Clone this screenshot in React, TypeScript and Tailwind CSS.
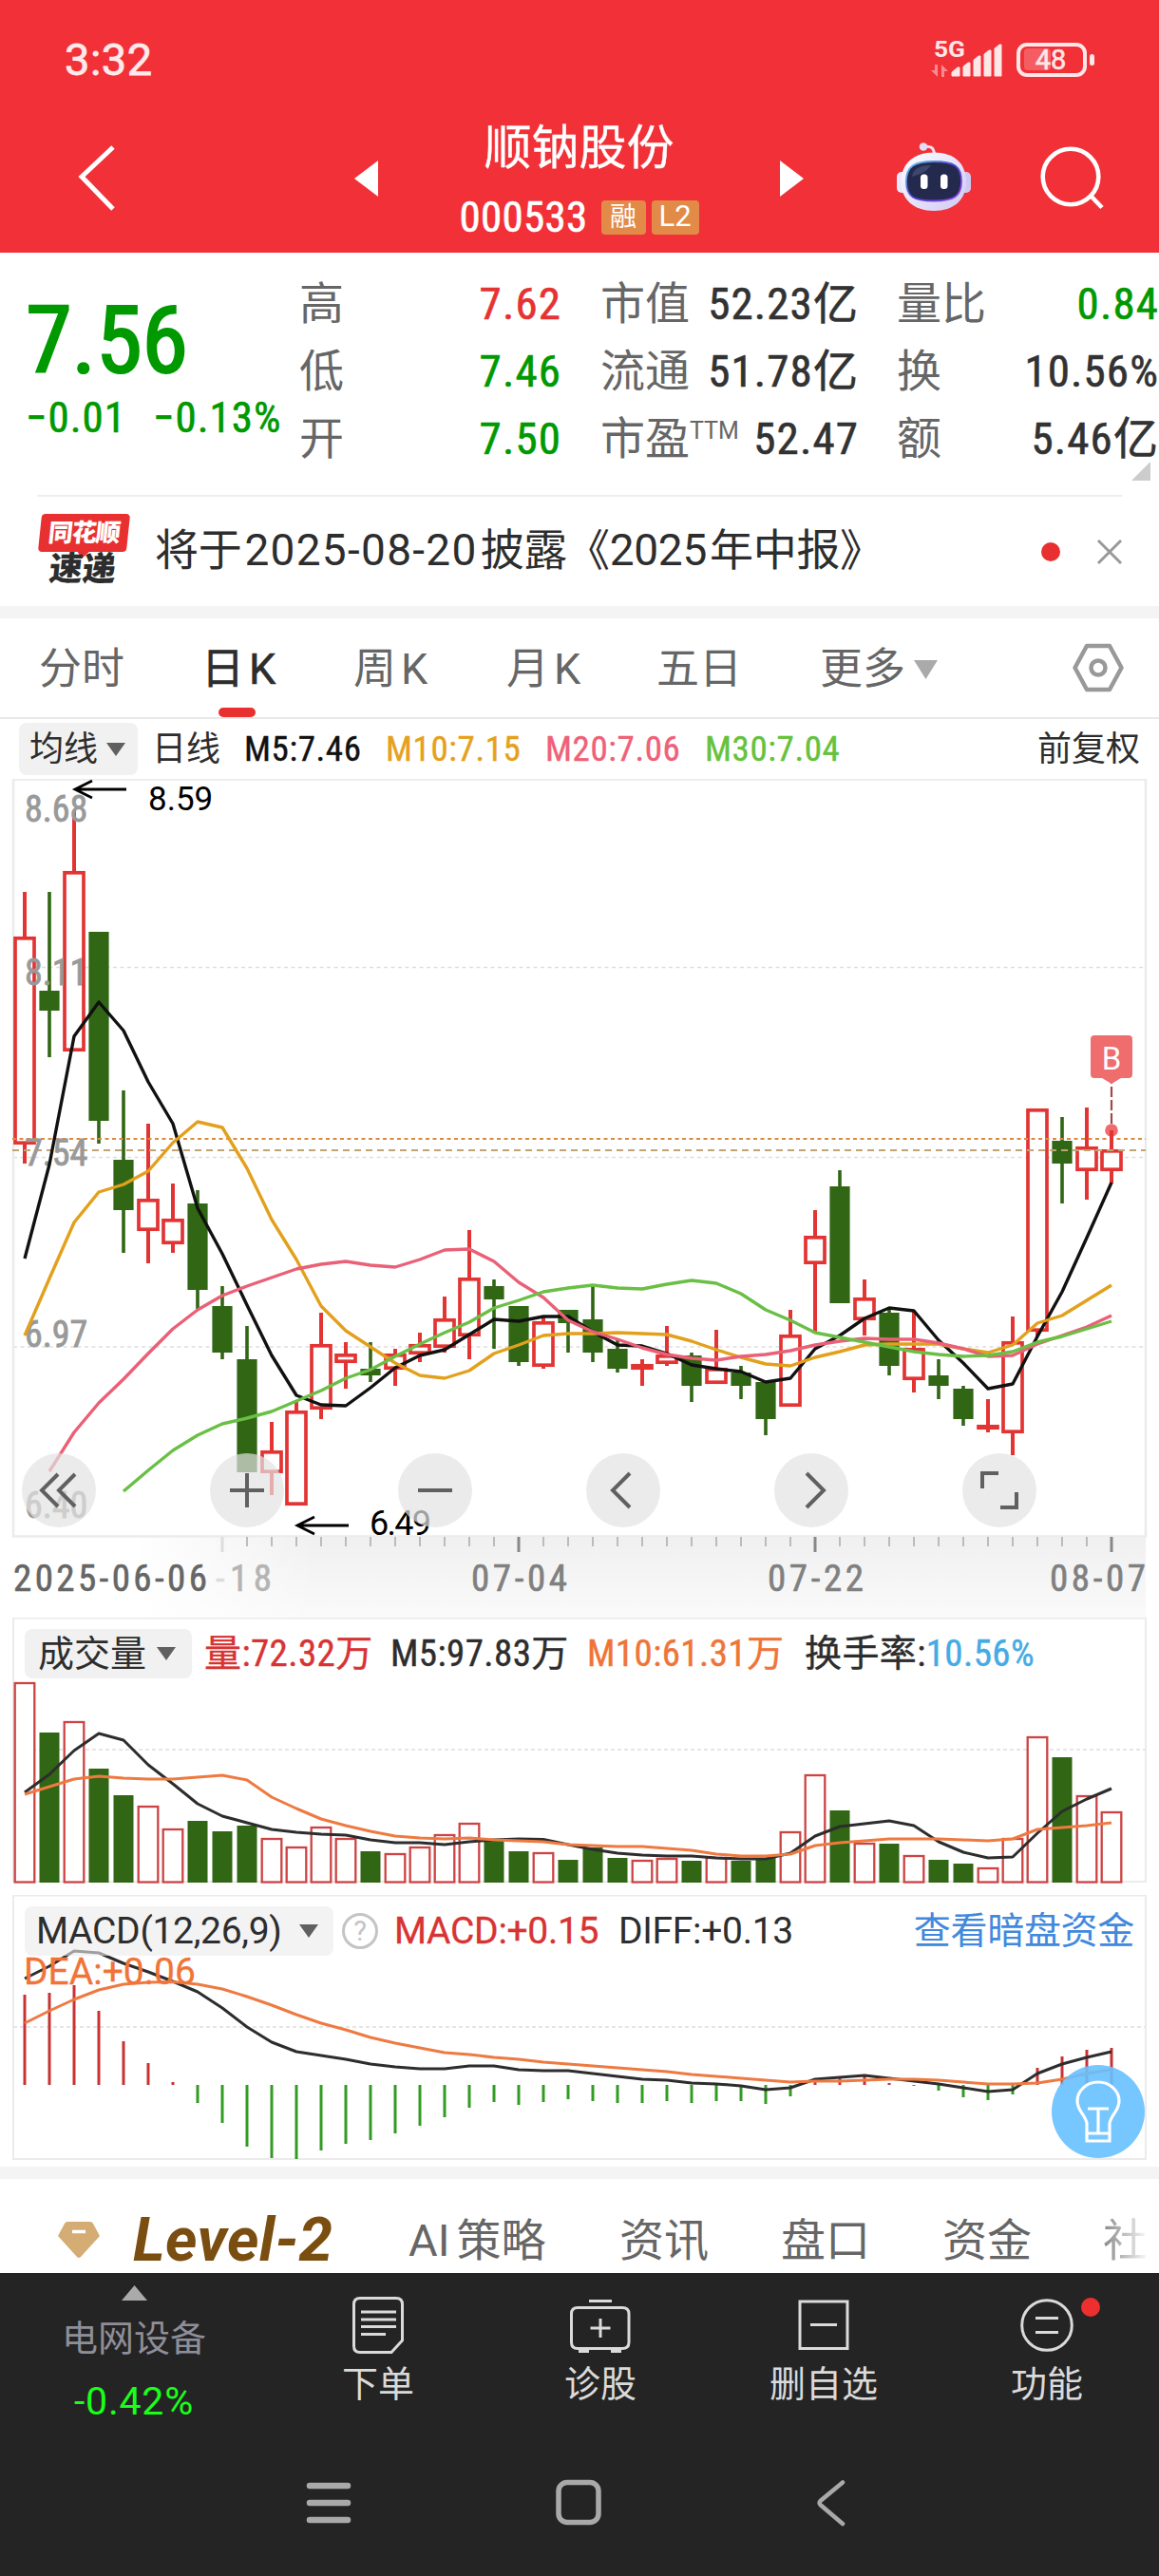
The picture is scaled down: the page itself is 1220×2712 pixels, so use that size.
import { ReactNode } from 'react';

// x of candle i; every series below uses the same 26px step
const cx = (i: number) => 26 + i * 26;

// [high, bodyTop, bodyBottom, low, rising]
const CANDLES: [number, number, number, number, 0 | 1][] = [
  [939, 986, 1205, 1225, 1], [939, 1043, 1064, 1113, 0], [853, 917, 1107, 1107, 1], [981, 981, 1180, 1204, 0],
  [1148, 1221, 1274, 1319, 0], [1183, 1262, 1296, 1330, 1], [1246, 1283, 1310, 1319, 1], [1253, 1267, 1358, 1378, 0],
  [1354, 1375, 1424, 1431, 0], [1396, 1431, 1550, 1550, 0], [1497, 1527, 1551, 1574, 1], [1476, 1485, 1585, 1585, 1],
  [1382, 1415, 1484, 1494, 1], [1413, 1425, 1435, 1462, 1], [1413, 1441, 1448, 1455, 0], [1420, 1425, 1442, 1459, 1],
  [1403, 1415, 1426, 1434, 1], [1365, 1388, 1419, 1424, 1], [1295, 1345, 1407, 1431, 1], [1347, 1354, 1368, 1420, 0],
  [1375, 1375, 1434, 1438, 0], [1387, 1391, 1439, 1441, 1], [1379, 1379, 1393, 1424, 0], [1353, 1389, 1424, 1434, 0],
  [1411, 1420, 1441, 1445, 0], [1431, 1436, 1442, 1459, 1], [1396, 1426, 1436, 1438, 1], [1424, 1427, 1459, 1476, 0],
  [1400, 1440, 1457, 1457, 1], [1438, 1445, 1459, 1473, 0], [1455, 1455, 1494, 1511, 0], [1379, 1405, 1481, 1481, 1],
  [1274, 1301, 1331, 1403, 1], [1232, 1249, 1372, 1372, 0], [1347, 1366, 1390, 1406, 1], [1377, 1382, 1438, 1448, 0],
  [1381, 1419, 1453, 1466, 1], [1431, 1448, 1459, 1473, 0], [1459, 1462, 1494, 1501, 0], [1473, 1500, 1505, 1508, 1],
  [1386, 1412, 1509, 1532, 1], [1167, 1167, 1402, 1407, 1], [1176, 1201, 1225, 1267, 0], [1166, 1207, 1233, 1263, 1],
  [1190, 1210, 1233, 1246, 1],
];

const MA5 = [1325, 1226, 1091, 1055, 1085, 1139, 1183, 1272, 1320, 1374, 1427, 1469, 1479, 1480, 1461, 1440, 1427, 1421, 1405, 1389, 1391, 1386, 1386, 1402, 1416, 1417, 1425, 1437, 1441, 1444, 1455, 1451, 1420, 1406, 1388, 1377, 1380, 1411, 1435, 1462, 1457, 1407, 1360, 1303, 1245];
const MA10 = [1406, 1346, 1287, 1255, 1247, 1233, 1203, 1181, 1187, 1230, 1284, 1326, 1375, 1401, 1418, 1435, 1448, 1451, 1443, 1425, 1416, 1406, 1404, 1404, 1403, 1404, 1405, 1412, 1421, 1429, 1436, 1438, 1429, 1423, 1416, 1415, 1415, 1415, 1420, 1424, 1416, 1393, 1385, 1369, 1353];
const MA20 = [1549, 1508, 1477, 1452, 1425, 1399, 1379, 1364, 1354, 1345, 1336, 1331, 1328, 1332, 1334, 1326, 1316, 1315, 1328, 1350, 1366, 1390, 1402, 1410, 1419, 1426, 1430, 1432, 1428, 1426, 1422, 1416, 1412, 1409, 1410, 1410, 1414, 1420, 1428, 1427, 1415, 1406, 1397, 1385];
const MA30 = [1570, 1548, 1527, 1511, 1499, 1493, 1486, 1475, 1464, 1451, 1442, 1428, 1415, 1403, 1392, 1377, 1369, 1360, 1356, 1353, 1356, 1357, 1352, 1348, 1351, 1362, 1379, 1390, 1403, 1408, 1413, 1418, 1423, 1426, 1428, 1427, 1423, 1413, 1407, 1399, 1391];

const VOLUME = [1772, 1824, 1813, 1862, 1890, 1902, 1926, 1917, 1928, 1922, 1936, 1945, 1924, 1936, 1949, 1952, 1945, 1932, 1920, 1938, 1949, 1951, 1958, 1945, 1956, 1959, 1957, 1959, 1956, 1959, 1956, 1929, 1869, 1906, 1941, 1941, 1954, 1958, 1962, 1967, 1936, 1829, 1850, 1891, 1908];
const VOL5 = [1887, 1868, 1843, 1825, 1832, 1858, 1878, 1899, 1912, 1919, 1926, 1929, 1931, 1932, 1937, 1940, 1940, 1942, 1939, 1937, 1936, 1936.5, 1942, 1947, 1951, 1953, 1954, 1954, 1956, 1957, 1957, 1951, 1933, 1923, 1920, 1917, 1922, 1939, 1950, 1956, 1955, 1930, 1907, 1894, 1883];
const VOL10 = [1889, 1881, 1873, 1870, 1872, 1873, 1873, 1871, 1869, 1874, 1892, 1904, 1915, 1922, 1928, 1933, 1935, 1936, 1935, 1937, 1938, 1939, 1942, 1943, 1944, 1944, 1946, 1948, 1952, 1954, 1954, 1952, 1943, 1940, 1938, 1936, 1936, 1936, 1937, 1938, 1936, 1926, 1924, 1922, 1919];

const ZERO = 2195;
const MACD = [2100, 2098, 2090, 2117, 2149, 2172, 2192, 2214, 2235, 2260, 2272, 2273, 2264, 2257, 2253, 2246, 2238, 2229, 2219, 2213, 2216, 2213, 2210, 2212, 2214, 2214, 2212, 2214, 2212, 2212, 2215, 2207, 2190, 2188, 2186, 2193, 2196, 2201, 2208, 2211, 2205, 2177, 2165, 2158, 2156];
const DIFF = [2083, 2070, 2054, 2056, 2067, 2076, 2086, 2097, 2114, 2134, 2150, 2160, 2164, 2168, 2173, 2176, 2178, 2178, 2175, 2175, 2179, 2180, 2180, 2183, 2186, 2189, 2190, 2193, 2194, 2196, 2200, 2198, 2189, 2187, 2185, 2188, 2191, 2194, 2198, 2202, 2200, 2183, 2173, 2166, 2160];
const DEA = [2130, 2117, 2105, 2095, 2089, 2087, 2086.5, 2089, 2094, 2102, 2111, 2121, 2130, 2137, 2145, 2151, 2156, 2161, 2163, 2166, 2168, 2171, 2173, 2175, 2177, 2179, 2181, 2184, 2186, 2188, 2190, 2192, 2191, 2191, 2190, 2189, 2189, 2190, 2192, 2194, 2194, 2193, 2189, 2183, 2179];

function Line({ data, color, from = 0, width = 3.4 }: { data: number[]; color: string; from?: number; width?: number }) {
  return (
    <polyline
      points={data.map((y, i) => `${cx(i + from)},${y}`).join(' ')}
      fill="none"
      stroke={color}
      strokeWidth={width}
      strokeLinejoin="round"
    />
  );
}

function Down({ className }: { className: string }) {
  return (
    <svg viewBox="0 0 20 14" preserveAspectRatio="none" className={className}>
      <path d="M0 0h20L10 14z" fill="currentColor" />
    </svg>
  );
}

function Header() {
  return (
    <header className="h-[266px] bg-[#f13037] text-white">
      <div className="flex h-[110px] items-start justify-between pl-[68px] pr-[68px] pt-[38px]">
        <span className="text-[47px] leading-[50px] tracking-[0.5px] text-[#ffe9ea] [-webkit-text-stroke:0.8px]">3:32</span>
        <svg viewBox="980 38 172 46" className="h-[46px] w-[172px]" fill="#ffe6e7">
          <text x="983" y="60" fontSize="24" fontWeight="700" textLength="33" lengthAdjust="spacingAndGlyphs">5G</text>
          <path d="M987 68v13l-7-7h4v-6zM991 81V68l7 7h-4v6z" opacity=".5" />
          <path d="M1002 80v-4l6-5h2v9zM1014 80V70l5-4h2v14zM1025 80V63l5-4h2v21zM1036 80V57l5-4h2v27zM1047 80V51l5-4h2v33z" stroke="#ffe6e7" strokeWidth="1" strokeLinejoin="round" />
          <rect x="1072" y="47" width="70" height="32" rx="9" fill="none" stroke="#ffe6e7" strokeWidth="4" />
          <rect x="1078" y="51" width="28" height="23" rx="4" opacity=".25" />
          <rect x="1147" y="57" width="5" height="12" rx="2.5" />
          <text x="1106" y="73" fontSize="29" textAnchor="middle" stroke="#ffe6e7" strokeWidth=".6">48</text>
        </svg>
      </div>
      <div className="flex h-[156px] items-center pl-[82px]">
        <svg viewBox="0 0 40 70" className="h-[70px] w-[40px]">
          <path d="M37 2L4 33L37 67" fill="none" stroke="white" strokeWidth="5" />
        </svg>
        <svg viewBox="0 0 25 38" className="ml-[251px] h-[38px] w-[25px]"><path d="M25 0v38L0 19z" fill="white" /></svg>
        <div className="flex w-[423px] flex-col items-center pt-[7px]">
          <h1 className="text-[50px] leading-[74px] [-webkit-text-stroke:0.4px]">顺钠股份</h1>
          <div className="flex h-[72px] items-center">
            <span className="text-[45px] leading-[60px] tracking-[0.3px] font-stretch-[87.5%] [-webkit-text-stroke:0.6px]">000533</span>
            <span className="ml-[14px] flex h-[36px] w-[47px] items-center justify-center rounded-[4px] bg-[#e28b48] text-[28px]">融</span>
            <span className="ml-[6px] flex h-[36px] w-[50px] items-center justify-center rounded-[4px] bg-[#e28b48] text-[31px]">L2</span>
          </div>
        </div>
        <svg viewBox="0 0 25 38" className="h-[38px] w-[25px]"><path d="M0 0v38L25 19z" fill="white" /></svg>
        <Robot />
        <svg viewBox="0 0 68 68" className="ml-[73px] h-[68px] w-[68px]" fill="none" stroke="white" strokeWidth="4.6">
          <circle cx="32" cy="32" r="29.3" />
          <path d="M53 52l12 12.5" />
        </svg>
      </div>
    </header>
  );
}

function Robot() {
  return (
    <svg viewBox="0 0 78 72" className="ml-[98px] mb-[4px] h-[72px] w-[78px]">
      <defs>
        <linearGradient id="shell" x1="0" y1="0" x2="1" y2="1">
          <stop offset="0" stopColor="#ffffff" />
          <stop offset="1" stopColor="#cfc8f4" />
        </linearGradient>
        <linearGradient id="rim" x1="0" y1="0" x2="1" y2="1">
          <stop offset="0" stopColor="#69d3ee" />
          <stop offset=".5" stopColor="#4c3fd0" />
          <stop offset="1" stopColor="#9a4be8" />
        </linearGradient>
      </defs>
      <path d="M29 4.5c7-1 10 1 10.500 8" fill="none" stroke="#f3dcea" strokeWidth="3" />
      <circle cx="28" cy="4.5" r="4.3" fill="#e4dcf4" />
      <rect x="0" y="31" width="12" height="22" rx="5" fill="#e9e6fb" />
      <rect x="66" y="31" width="12" height="22" rx="5" fill="#cdc8f2" />
      <path d="M39 10.500c22 0 34 12 34 31S60 72 39 72S4.500 60 4.500 41.500S17 10.500 39 10.500z" fill="url(#shell)" />
      <path d="M39 20c21 0 29 5 29 21S60 61.500 39 61.500S10 57 10 41S18 20 39 20z" fill="#232a4d" stroke="url(#rim)" strokeWidth="1.8" />
      <path d="M16 36c1-8 7-12 20-12c-4 6-10 9-20 12z" fill="#4a5278" opacity=".7" />
      <rect x="25" y="33.5" width="7.5" height="15.5" rx="3.5" fill="white" />
      <rect x="46" y="33.5" width="7.5" height="15.5" rx="3.5" fill="white" />
    </svg>
  );
}

function Stat({ label, value, sup, color = 'text-[#323232]' }: { label: string; value: string; sup?: string; color?: string }) {
  return (
    <div className="flex h-[71px] items-center justify-between text-[47px] leading-[71px]">
      <span className="flex whitespace-nowrap text-[#666]">
        {label}
        {sup && <sup className="top-[-8px] text-[25px] leading-[71px]">{sup}</sup>}
      </span>
      <span className={`whitespace-nowrap tracking-[1.1px] font-stretch-[87.5%] [-webkit-text-stroke:0.6px] ${color}`}>{value}</span>
    </div>
  );
}

function Quote() {
  return (
    <section className="relative flex h-[255px] pt-[18px]">
      <div className="w-[315px] pl-[27px] pt-[24px] whitespace-nowrap text-[#090] font-stretch-[87.5%]">
        <div className="text-[99px] leading-[100px] tracking-[-0.5px] [-webkit-text-stroke:2px]">7.56</div>
        <div className="mt-[7px] flex gap-[28px] text-[45px] leading-[50px] tracking-[1px] [-webkit-text-stroke:0.6px]">
          <span>−0.01</span>
          <span>−0.13%</span>
        </div>
      </div>
      <div className="w-[276px]">
        <Stat label="高" value="7.62" color="text-[#e63232]" />
        <Stat label="低" value="7.46" color="text-[#090]" />
        <Stat label="开" value="7.50" color="text-[#090]" />
      </div>
      <div className="ml-[41px] w-[272px]">
        <Stat label="市值" value="52.23亿" />
        <Stat label="流通" value="51.78亿" />
        <Stat label="市盈" sup="TTM" value="52.47" />
      </div>
      <div className="ml-[40px] w-[276px]">
        <Stat label="量比" value="0.84" color="text-[#090]" />
        <Stat label="换" value="10.56%" />
        <Stat label="额" value="5.46亿" />
      </div>
      <svg viewBox="0 0 20 20" className="absolute right-[9px] top-[220px] h-[20px] w-[20px]"><path d="M20 0v20H0z" fill="#ccc" /></svg>
    </section>
  );
}

function Notice() {
  return (
    <section className="flex h-[115px] items-center pl-[40px] pr-[38px]">
      <div className="flex w-[96px] flex-col items-center pb-[2px]">
        <div className="relative flex h-[40px] w-[93px] -skew-x-6 items-center justify-center rounded-[4px] bg-[#e93030] text-[26px] font-black leading-[40px] tracking-[-1px] text-white">
          同花顺
          <svg viewBox="0 0 14 8" className="absolute left-[41px] top-[39px] h-[8px] w-[14px]"><path d="M0 0h14L6 8z" fill="#e93030" /></svg>
        </div>
        <div className="mr-[2px] -skew-x-6 text-[35px] font-black leading-[38px] text-[#2d2d2d]">速递</div>
      </div>
      <p className="mb-[3px] ml-[27px] whitespace-nowrap text-[46px] leading-[60px] tracking-[-0.3px] text-[#2d2d2d]">
        将于<span className="mx-[3px] tracking-[1.3px]">2025-08-20</span>披露<span className="-ml-[1px]">《</span>
        <span className="mr-[3px]">2025</span>年中报》
      </p>
      <span className="ml-auto h-[20px] w-[20px] rounded-full bg-[#e93030]" />
      <svg viewBox="0 0 28 28" className="ml-[38px] h-[28px] w-[28px]"><path d="M2 2l24 24M26 2L2 26" stroke="#999" strokeWidth="3" /></svg>
    </section>
  );
}

function PeriodTabs() {
  return (
    <nav className="relative grid h-[106px] grid-cols-[171px_160px_161px_158px_172px_266px_54px] items-center border-b-2 border-[#e8e8e8] pl-[41px] text-[45px] text-[#666]">
      <span className="pt-[3px]">分时</span>
      <span className="pt-[3px] text-[#2d2d2d] [-webkit-text-stroke:0.6px]">日<span className="ml-[5px]">K</span></span>
      <span className="pt-[3px]">周<span className="ml-[5px]">K</span></span>
      <span className="pt-[3px]">月<span className="ml-[5px]">K</span></span>
      <span className="pt-[3px]">五日</span>
      <span className="flex items-center pt-[3px]">更多<Down className="ml-[9px] h-[20px] w-[25px] text-[#aaa]" /></span>
      <svg viewBox="0 0 54 52" className="h-[52px] w-[54px]" fill="none" stroke="#999" strokeWidth="4.5" strokeLinejoin="round">
        <path d="M15 3h24l12.500 23L39 49H15L2.500 26z" />
        <circle cx="27" cy="26" r="7.5" />
      </svg>
      <i className="absolute bottom-0 left-[230px] h-[10px] w-[39px] rounded-[5px] bg-[#e93030]" />
    </nav>
  );
}

function MaBar() {
  return (
    <div className="flex h-[63px] items-center whitespace-nowrap pl-[20px] pr-[20px] text-[37px] text-[#2d2d2d]">
      <div className="flex h-[55px] w-[125px] items-center rounded-[8px] bg-[#f1f1f1] pl-[11px] text-[36px]">
        均线<Down className="ml-[9px] h-[14px] w-[20px] text-[#606060]" />
      </div>
      <span className="ml-[15px] w-[97px] text-[36px]">日线</span>
      <div className="flex tracking-[0.6px] font-stretch-[87.5%] [-webkit-text-stroke:0.4px]">
        <span className="w-[149px] text-[#111]">M5:7.46</span>
        <span className="w-[168px] text-[#e5a11b]">M10:7.15</span>
        <span className="w-[168px] text-[#ef6177]">M20:7.06</span>
        <span className="text-[#66c23c]">M30:7.04</span>
      </div>
      <span className="ml-auto text-[36px]">前复权</span>
    </div>
  );
}

function CandleChart() {
  return (
    <svg viewBox="0 820 1220 883" className="block h-[883px] w-[1220px]">
      <defs>
        <linearGradient id="axisY" x1="0" y1="0" x2="0" y2="1">
          <stop offset="0" stopColor="#f0f0f0" />
          <stop offset="1" stopColor="#fafafa" />
        </linearGradient>
        <linearGradient id="fade" x1="0" y1="0" x2="1" y2="0">
          <stop offset=".4" stopColor="white" />
          <stop offset="1" stopColor="white" stopOpacity="0" />
        </linearGradient>
      </defs>

      <path d="M14 1018.500H1206M14 1218.500H1206M14 1418H1206" stroke="#dedede" strokeWidth="1.5" strokeDasharray="4 3.5" />
      <rect x="14" y="820.5" width="1192" height="797" fill="none" stroke="#ebebeb" strokeWidth="2.5" />

      {CANDLES.map(([high, top, bottom, low, up], i) =>
        up ? (
          <g key={i} stroke="#e33434" strokeWidth="4" fill="white">
            <path d={`M${cx(i)} ${high}V${top + 2}M${cx(i)} ${bottom - 2}V${low}`} />
            <rect x={cx(i) - 10} y={top + 1.8} width="20" height={Math.max(bottom - top - 3.6, 1)} strokeWidth="3.7" />
          </g>
        ) : (
          <g key={i} fill="#306614">
            <rect x={cx(i) - 1.8} y={high} width="3.6" height={low - high} />
            <rect x={cx(i) - 10.6} y={top} width="21.2" height={bottom - top} />
          </g>
        )
      )}

      <path d="M13 1199H1206" stroke="#db8a3c" strokeWidth="2" strokeDasharray="4 3.5" />
      <path d="M13 1211H1206" stroke="#c0a473" strokeWidth="2" strokeDasharray="7 5" />

      <g fill="#999" fontSize="38" className="font-stretch-[87.5%]" stroke="#999" strokeWidth=".8">
        <text x="26" y="865">8.68</text>
        <text x="26" y="1037">8.11</text>
        <text x="26" y="1227">7.54</text>
        <text x="26" y="1418">6.97</text>
        <text x="26" y="1598">6.40</text>
      </g>

      <Line data={MA5} color="#111" />
      <Line data={MA10} color="#e2a01c" />
      <Line data={MA20} from={1} color="#ea6076" />
      <Line data={MA30} from={4} color="#6abf45" />

      <g stroke="#000" strokeWidth="2.8" fill="none">
        <path d="M133 831H79M97 822l-18 9l18 9" />
        <path d="M367 1606H313M331 1597l-18 9l18 9" />
      </g>
      <text x="156" y="853" fontSize="35">8.59</text>
      <text x="389" y="1616" fontSize="36" textLength="65">6.49</text>

      <path d="M1170 1130V1190" stroke="#a2484d" strokeWidth="2.2" strokeDasharray="11 3" />
      <circle cx="1170" cy="1190" r="6.8" fill="#ef6b6d" />
      <path d="M1170 1190V1210" stroke="#e33434" strokeWidth="4" />
      <path d="M1152 1090h36a4 4 0 0 1 4 4v37a4 4 0 0 1-4 4h-8l-10 6l-10-6h-8a4 4 0 0 1-4-4v-37a4 4 0 0 1 4-4z" fill="#f06d6e" />
      <text x="1170" y="1126" fontSize="33" fill="white" textAnchor="middle">B</text>

      {/* date axis */}
      <rect x="14" y="1619" width="1192" height="84" fill="url(#axisY)" />
      <rect x="14" y="1619" width="320" height="84" fill="url(#fade)" />
      <path d="M234 1618v16" stroke="#ddd" strokeWidth="3" />
      {Array.from({ length: 36 }, (_, n) => n + 9).map((i) => (
        <path key={i} d={i % 12 === 8 ? `M${cx(i)} 1618v16` : `M${cx(i)} 1618v10`} stroke={i % 12 === 8 ? '#888' : '#aaa'} strokeWidth={i % 12 === 8 ? 3 : 1.5} />
      ))}
      <g fontSize="39" fill="#808080" stroke="#808080" strokeWidth=".6" className="font-stretch-[87.5%]">
        <text x="227" y="1675" textLength="59" fill="#b4b4b4" stroke="#b4b4b4"><tspan fill="#dcdcdc" stroke="#dcdcdc">-</tspan>18</text>
        <text x="496" y="1675" textLength="101">07-04</text>
        <text x="808" y="1675" textLength="101">07-22</text>
        <text x="1105" y="1675" textLength="101">08-07</text>
        <text x="14" y="1675" fill="#666" stroke="#666" textLength="204">2025-06-06</text>
      </g>
    </svg>
  );
}

function RoundButton({ children }: { children: ReactNode }) {
  return (
    <button className="h-[78px] w-[78px] rounded-full bg-[#e3e3e3]/70">
      <svg viewBox="-39 -39 78 78" fill="none" stroke="#606060" strokeWidth="4">{children}</svg>
    </button>
  );
}

function ChartControls() {
  return (
    <div className="absolute left-[23px] top-[710px] flex gap-[120px]">
      <RoundButton><path d="M-1 -17L-18 0L-1 17M17 -17L0 0L17 17" /></RoundButton>
      <RoundButton><path d="M-18 0H18M0 -18V18" /></RoundButton>
      <RoundButton><path d="M-18 0H18" /></RoundButton>
      <RoundButton><path d="M7 -18L-11 0L7 18" /></RoundButton>
      <RoundButton><path d="M-5 -18L13 0L-5 18" /></RoundButton>
      <RoundButton><path d="M-1 -18H-18V-2M1 18H18V2" /></RoundButton>
    </div>
  );
}

function VolumePanel() {
  return (
    <section className="relative h-[292px]">
      <svg viewBox="0 1703 1220 292" className="absolute inset-0 h-[292px] w-[1220px]">
        <rect x="14" y="1703.5" width="1192" height="277.5" fill="none" stroke="#ebebeb" strokeWidth="2" />
        <path d="M20 1842H1206" stroke="#e6e6e6" strokeWidth="2" strokeDasharray="4 3" />
        {VOLUME.map((y, i) =>
          CANDLES[i][4] ? (
            <rect key={i} x={cx(i) - 10.3} y={y} width="20.6" height={1981.5 - y} fill="white" stroke="#cd4343" strokeWidth="2.3" />
          ) : (
            <rect key={i} x={cx(i) - 10.5} y={y} width="21" height={1982 - y} fill="#306614" />
          )
        )}
        <Line data={VOL5} color="#2d2d2d" width={3} />
        <Line data={VOL10} color="#ee7a41" width={3} />
      </svg>
      <div className="relative flex h-[64px] items-end whitespace-nowrap pl-[26px] text-[39px] leading-[52px] text-[#2d2d2d]">
        <div className="flex h-[52px] w-[176px] items-center rounded-[8px] bg-[#f1f1f1] pl-[14px] text-[38px]">
          成交量<Down className="ml-[11px] h-[14px] w-[20px] text-[#606060]" />
        </div>
        <div className="flex tracking-[0.4px] font-stretch-[87.5%] [-webkit-text-stroke:0.4px]">
          <span className="ml-[13px] w-[196px] text-[#d83333]">量:72.32万</span>
          <span className="w-[207px]">M5:97.83万</span>
          <span className="w-[229px] text-[#f07438]">M10:61.31万</span>
          <span>换手率:<span className="text-[#45aae5]">10.56%</span></span>
        </div>
      </div>
    </section>
  );
}

function MacdPanel() {
  return (
    <section className="relative h-[286px]">
      <svg viewBox="0 1995 1220 286" className="absolute inset-0 h-[286px] w-[1220px]">
        <rect x="14" y="1995.5" width="1192" height="277.5" fill="none" stroke="#ebebeb" strokeWidth="2" />
        <path d="M14 2134H1206" stroke="#e6e6e6" strokeWidth="2" strokeDasharray="4 3" />
        {MACD.map((y, i) => (
          <path key={i} d={`M${cx(i)} ${ZERO}V${y}`} stroke={y < ZERO ? '#c83232' : '#329b23'} strokeWidth="3" />
        ))}
        <Line data={DIFF} color="#2d2d2d" width={3} />
        <Line data={DEA} color="#ee7a41" width={3} />
      </svg>
      <div className="relative flex h-[64px] items-end whitespace-nowrap pl-[26px] pr-[26px] text-[39px] leading-[52px] tracking-[-0.3px] text-[#2d2d2d]">
        <div className="flex h-[52px] w-[325px] items-center rounded-[8px] bg-[#ebebeb]/60 pl-[12px]">
          <span className="w-[265px]">MACD(12,26,9)</span>
          <Down className="ml-[12px] h-[14px] w-[20px] text-[#606060]" />
        </div>
        <span className="mb-[7px] ml-[9px] flex h-[38px] w-[38px] items-center justify-center rounded-full border-[3px] border-[#c4c4c4] text-[29px] leading-none text-[#c4c4c4]">?</span>
        <span className="ml-[17px] w-[236px] text-[#d83333] [-webkit-text-stroke:0.3px]">MACD:+0.15</span>
        <span>DIFF:+0.13</span>
        <span className="ml-auto text-[39px] text-[#4189dc]">查看暗盘资金</span>
      </div>
      <div className="relative pl-[25px] pt-[2px] text-[39px] leading-[30px] text-[#f07438] [-webkit-text-stroke:0.3px]">DEA:+0.06</div>
      <button className="absolute left-[1107px] top-[179px] h-[98px] w-[98px] rounded-full bg-[#67c0ff]/90">
        <svg viewBox="-49 -49 98 98" fill="none" stroke="white" strokeWidth="3.2">
          <path d="M-12 12C-14 3-22 -1-22 -11A22 20 0 0 1 22 -11C22 -1 14 3 12 12V31H-12zM-12 23H12M-11 -3H11M0 -3V23" />
        </svg>
      </button>
    </section>
  );
}

function InfoTabs() {
  return (
    <nav className="grid h-[99px] grid-cols-[79px_290px_222px_170px_170px_169px_57px] items-center whitespace-nowrap pl-[61px] pt-[31px] text-[47px] leading-[68px] text-[#666]">
      <svg viewBox="0 0 44 38" className="mt-[-2px] h-[38px] w-[44px]">
        <path d="M10 0h24q2 0 3 2l7 13L24 37q-2 2-4 0L0 15L7 2q1-2 3-2z" fill="#d4ac74" />
        <path d="M15 10.500h14" stroke="white" strokeWidth="3.5" />
      </svg>
      <span className="text-[64px] font-bold italic tracking-[0.4px] text-[#7a4d10]">Level-2</span>
      <span>AI<span className="ml-[7px]">策略</span></span>
      <span>资讯</span>
      <span>盘口</span>
      <span>资金</span>
      <span className="bg-gradient-to-r from-[#888] to-white to-85% bg-clip-text text-transparent">社</span>
    </nav>
  );
}

function Action({ label, children }: { label: string; children: ReactNode }) {
  return (
    <div className="flex flex-col items-center pt-[25px]">
      <svg viewBox="0 0 70 60" className="h-[60px] w-[70px]" fill="none" stroke="#dadada" strokeWidth="3">{children}</svg>
      <span className="mt-[12px] text-[38px] leading-[40px] text-[#dadada]">{label}</span>
    </div>
  );
}

function BottomBar() {
  return (
    <footer className="relative h-[319px] bg-[#242424]">
      <div className="grid h-[165px] grid-cols-[282px_232px_236px_234px_236px]">
        <div className="flex flex-col items-center pt-[13px]">
          <svg viewBox="0 0 27 16" className="h-[16px] w-[27px]"><path d="M13.500 0L27 16H0z" fill="#aaa" /></svg>
          <span className="mt-[20px] text-[38px] leading-[40px] text-[#8e8e99]">电网设备</span>
          <span className="mt-[26px] text-[41px] leading-[40px] text-[#1aff1a] tracking-[0.8px]">-0.42%</span>
        </div>
        <Action label="下单">
          <path d="M16 1.500H54Q60.500 1.500 60.500 8V46L49 58.500H16Q9.500 58.500 9.500 52V8Q9.500 1.500 16 1.500zM17 16H54M17 24H54M17 31.500H54M17 39.500H43" />
        </Action>
        <Action label="诊股">
          <path d="M11 11.500H58Q65 11.500 65 18V48Q65 54.500 58 54.500H11Q4.500 54.500 4.500 48V18Q4.500 11.500 11 11.500zM23 4.500H47M35 23V43M24.500 33H45.500M12 57.500H23M46 57.500H57" />
        </Action>
        <Action label="删自选">
          <path d="M10 5H60V54.500H10zM21 29.500H49" />
        </Action>
        <Action label="功能">
          <circle cx="35" cy="30" r="26.3" />
          <path d="M23 22.500H47M23 37.500H47" />
        </Action>
      </div>
      <i className="absolute left-[1138px] top-[26px] h-[20px] w-[20px] rounded-full bg-[#ee2f2f]" />
      <div className="flex h-[154px] items-center pl-[322px]">
        <svg viewBox="0 0 48 50" className="h-[50px] w-[48px]" stroke="#a9a9a9" strokeWidth="6.5" strokeLinecap="round"><path d="M4 7H44M4 25H44M4 43H44" /></svg>
        <svg viewBox="0 0 48 50" className="ml-[215px] h-[50px] w-[48px]"><rect x="3" y="3.5" width="42" height="42" rx="9" fill="none" stroke="#a9a9a9" strokeWidth="5.5" /></svg>
        <svg viewBox="0 0 32 50" className="ml-[226px] h-[50px] w-[32px]"><path d="M28 3.500L4.500 23q-2 2 0 4L28 47" fill="none" stroke="#a9a9a9" strokeWidth="4.5" strokeLinecap="round" /></svg>
      </div>
    </footer>
  );
}

export default function App() {
  return (
    <div className="h-[2712px] w-[1220px] overflow-hidden bg-white font-[Roboto,'Noto_Sans_CJK_SC',sans-serif]">
      <Header />
      <Quote />
      <div className="mx-[39px] h-[2px] bg-[#eee]" />
      <Notice />
      <div className="h-[13px] bg-[#f4f4f4]" />
      <PeriodTabs />
      <MaBar />
      <section className="relative">
        <CandleChart />
        <ChartControls />
      </section>
      <VolumePanel />
      <MacdPanel />
      <div className="h-[13px] bg-[#f4f4f4]" />
      <InfoTabs />
      <BottomBar />
    </div>
  );
}
